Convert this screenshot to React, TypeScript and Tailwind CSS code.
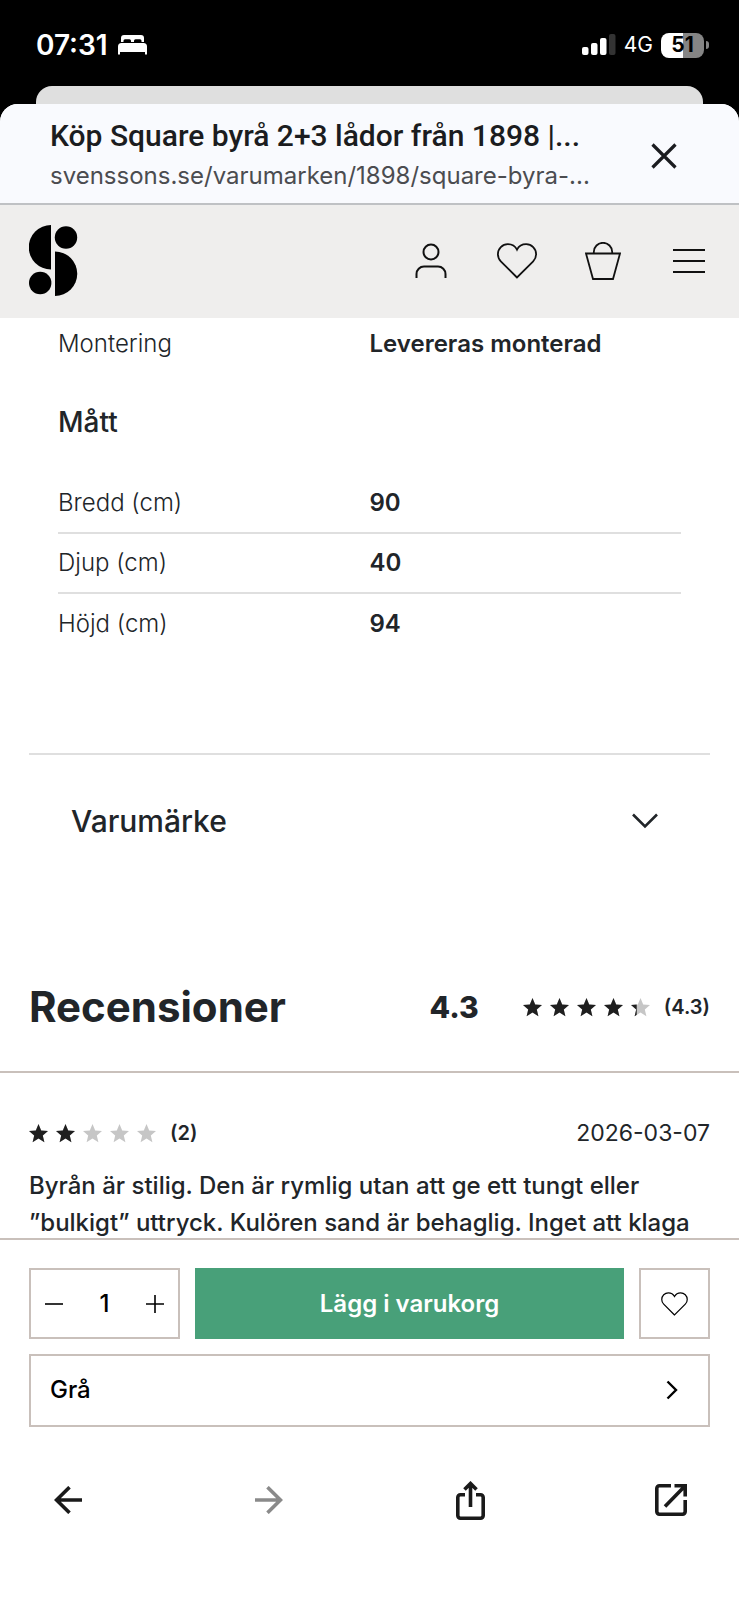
import React, { useState } from 'react';

interface Spec {
  label: string;
  value: string;
}

const measurements: Spec[] = [
  { label: 'Bredd (cm)', value: '90' },
  { label: 'Djup (cm)', value: '40' },
  { label: 'Höjd (cm)', value: '94' },
];

function BedIcon() {
  return (
    <svg className="h-5 w-[29px]" viewBox="0 0 29 20" fill="currentColor" aria-hidden="true">
      <path d="M3 7V3a3 3 0 0 1 3-3h17a3 3 0 0 1 3 3v4h-2.500V5.800A1.500 1.500 0 0 0 22 4.300h-4.500A1.500 1.500 0 0 0 16 5.800V7h-3V5.800A1.500 1.500 0 0 0 11.500 4.300H7A1.500 1.500 0 0 0 5.500 5.800V7z" />
      <path d="M0 11.500A3.500 3.500 0 0 1 3.500 8h22a3.500 3.500 0 0 1 3.500 3.500v8h-2V17H2v2.500H0z" />
    </svg>
  );
}

function SignalIcon() {
  return (
    <svg className="h-[22px] w-[34px]" viewBox="0 0 34 22" fill="currentColor" aria-hidden="true">
      <rect x="0" y="13" width="6.500" height="8" rx="2" />
      <rect x="9" y="9" width="6.500" height="12" rx="2" />
      <rect x="18" y="4" width="6.500" height="17" rx="2" />
      <rect x="27" y="0" width="6.500" height="21" rx="2" fill="#333" />
    </svg>
  );
}

function Logo() {
  return (
    <svg className="h-[71px] w-[49px]" viewBox="0 0 49 71" fill="#000" aria-hidden="true">
      <path d="M22 0v44.500A22.250 22.250 0 0 1 22 0z" />
      <circle cx="37" cy="12.500" r="11.200" />
      <path d="M26 26.500a22.250 22.250 0 0 1 0 44.500z" />
      <circle cx="11.200" cy="58" r="11.200" />
    </svg>
  );
}

function HeartIcon({ className }: { className: string }) {
  return (
    <svg className={className} viewBox="0 0 40 36" fill="none" stroke="currentColor" strokeWidth={1.8} aria-hidden="true">
      <path d="M20 34.500 3.800 18.300A10 10 0 0 1 .9 11.200C.9 5.500 5.400 1.200 10.800 1.200c4.200 0 7.400 2 9.200 5.500 1.800-3.500 5-5.500 9.200-5.500 5.400 0 9.900 4.300 9.900 10a10 10 0 0 1-2.900 7.100z" />
    </svg>
  );
}

const STAR = 'M9.500 0l2.700 6.500 6.800.4-5.200 4.500 1.600 6.900-5.900-3.700-5.900 3.700 1.600-6.900L0 6.900l6.800-.4z';

function Stars({ rating, label }: { rating: number; label: string }) {
  return (
    <div className="flex items-center gap-3.5">
      <div className="flex gap-2">
        {[0, 1, 2, 3, 4].map((i) => {
          const fill = Math.max(0, Math.min(1, rating - i));
          return (
            <svg key={i} className="h-[19px] w-[19px]" viewBox="0 0 19 19" aria-hidden="true">
              <path d={STAR} fill="#c6c6c6" />
              <clipPath id={`star-${label}-${i}`}>
                <rect width={19 * fill} height="19" />
              </clipPath>
              <path d={STAR} fill="#1f1f1f" clipPath={`url(#star-${label}-${i})`} />
            </svg>
          );
        })}
      </div>
      <span className="text-xl font-semibold">({label})</span>
    </div>
  );
}

export default function App() {
  const [quantity, setQuantity] = useState(1);

  return (
    <div className="flex h-screen flex-col bg-black font-['Inter',sans-serif] text-[#212529]">
      {/* Status bar */}
      <div className="flex h-[86px] shrink-0 items-center justify-between pr-[30px] pl-9 pt-1 text-white">
        <div className="flex items-center gap-2.5">
          <span className="text-[28px] font-semibold leading-8">07:31</span>
          <BedIcon />
        </div>
        <div className="flex items-center gap-2">
          <SignalIcon />
          <span className="text-[21px]">4G</span>
          <div className="flex items-center gap-0.5">
            <span className="flex h-[25px] w-[43px] items-center justify-center rounded-lg bg-linear-to-r from-white from-50% to-[#858585] to-50% text-[21px] font-bold text-black">
              51
            </span>
            <span className="h-2 w-[3px] rounded-r-full bg-[#858585]" />
          </div>
        </div>
      </div>

      <div className="mx-9 h-[18px] shrink-0 rounded-t-2xl bg-[#dfdfdf]" />

      <div className="flex min-h-0 flex-1 flex-col overflow-hidden rounded-t-[18px] bg-white">
        {/* Page title */}
        <div className="flex h-[101px] shrink-0 items-center border-b-2 border-[#bfc1c4] bg-[#f9fafe] pt-1 pr-[55px] pl-[50px]">
          <div className="min-w-0 flex-1">
            <h1 className="truncate font-['Roboto',sans-serif] text-3xl font-medium leading-10 text-[#1b1c20]">
              Köp Square byrå 2+3 lådor från 1898 |...
            </h1>
            <p className="truncate text-2xl leading-10 text-[#4b4c50]">svenssons.se/varumarken/1898/square-byra-...</p>
          </div>
          <button type="button" aria-label="Stäng" className="ml-8 flex h-10 w-10 items-center justify-center text-[#1b1c20]">
            <svg className="h-[26px] w-[26px]" viewBox="0 0 26 26" fill="none" stroke="currentColor" strokeWidth={3.2} aria-hidden="true">
              <path d="M1.500 1.500l23 23M24.500 1.500l-23 23" />
            </svg>
          </button>
        </div>

        {/* Shop header */}
        <header className="flex h-[113px] shrink-0 items-center justify-between bg-[#efeeed] pr-[30px] pb-0.5 pl-[29px]">
          <a href="#" aria-label="Svenssons">
            <Logo />
          </a>
          <nav className="flex items-center gap-[46px] text-[#111]">
            <button type="button" aria-label="Konto" className="flex h-10 w-10 items-center justify-center">
              <svg className="h-9 w-8" viewBox="0 0 32 36" fill="none" stroke="currentColor" strokeWidth={2} aria-hidden="true">
                <circle cx="16" cy="9" r="7.500" />
                <path d="M1.500 35v-4a7.500 7.500 0 0 1 7.500-7.500h14a7.500 7.500 0 0 1 7.500 7.500v4" />
              </svg>
            </button>
            <button type="button" aria-label="Favoriter" className="flex h-10 w-10 items-center justify-center">
              <HeartIcon className="h-9 w-10" />
            </button>
            <button type="button" aria-label="Varukorg" className="flex h-10 w-10 items-center justify-center">
              <svg className="h-[38px] w-9" viewBox="0 0 36 38" fill="none" stroke="currentColor" strokeWidth={1.800} aria-hidden="true">
                <path d="M1 11.500h34l-7 25.500H8z" />
                <path d="M8.800 11.500V10a9.200 9.200 0 0 1 18.400 0v1.500" />
              </svg>
            </button>
            <button type="button" aria-label="Meny" className="flex h-10 w-10 items-center justify-center">
              <svg className="h-6 w-8" viewBox="0 0 32 24" stroke="currentColor" strokeWidth={1.800} aria-hidden="true">
                <path d="M0 1h32M0 12h32M0 23h32" />
              </svg>
            </button>
          </nav>
        </header>

        <main className="min-h-0 flex-1 overflow-hidden">
          <section className="mx-[58px] text-2xl">
            <dl className="grid grid-cols-2 pt-2.5 leading-8">
              <dt className="font-light">Montering</dt>
              <dd className="font-semibold">Levereras monterad</dd>
            </dl>
            <h2 className="mt-[46px] text-[28px] font-medium leading-8">Mått</h2>
            <table className="mt-[35px] w-full table-fixed text-left">
              <tbody className="divide-y-2 divide-[#dfdfdf]">
                {measurements.map((row) => (
                  <tr key={row.label} className="h-[60px]">
                    <th scope="row" className="p-0 font-light">{row.label}</th>
                    <td className="p-0 font-semibold">{row.value}</td>
                  </tr>
                ))}
              </tbody>
            </table>
          </section>

          <section className="mx-[29px] mt-[100px] border-t-2 border-[#dfdfdf]">
            <button type="button" className="flex w-full items-center justify-between pt-[46px] pr-[52px] pb-12 pl-[42px]">
              <span className="text-3xl font-medium leading-10">Varumärke</span>
              <svg className="h-4 w-[26px]" viewBox="0 0 26 16" fill="none" stroke="currentColor" strokeWidth={2.600} aria-hidden="true">
                <path d="M1 1.500l12 12 12-12" />
              </svg>
            </button>
          </section>

          <section className="mt-[92px]">
            <div className="flex items-center border-b-2 border-[#c9c0bb] px-[29px] pb-[38px]">
              <h2 className="flex-1 text-[42px] font-bold leading-[52px]">Recensioner</h2>
              <span className="mr-11 text-3xl font-extrabold">4.3</span>
              <Stars rating={4.3} label="4.3" />
            </div>
            <article className="px-[29px] pt-11">
              <div className="flex items-center justify-between">
                <Stars rating={2} label="2" />
                <time className="text-[23px] leading-8">2026-03-07</time>
              </div>
              <p className="mt-[18px] text-2xl font-medium leading-[37px]">
                Byrån är stilig. Den är rymlig utan att ge ett tungt eller ”bulkigt” uttryck. Kulören sand är behaglig. Inget att klaga
              </p>
            </article>
          </section>
        </main>

        {/* Buy bar */}
        <div className="shrink-0 border-t-2 border-[#c9c0bb] px-[29px] pt-7 text-2xl">
          <div className="flex h-[71px] gap-[15px]">
            <div className="flex w-[151px] items-center justify-between border-2 border-[#c9c0bb] px-3.5 text-black">
              <button type="button" aria-label="Minska antal" onClick={() => setQuantity(Math.max(1, quantity - 1))}>
                <svg className="h-[18px] w-[18px]" viewBox="0 0 18 18" stroke="currentColor" strokeWidth={1.600} aria-hidden="true">
                  <path d="M0 9h18" />
                </svg>
              </button>
              <span className="font-medium">{quantity}</span>
              <button type="button" aria-label="Öka antal" onClick={() => setQuantity(quantity + 1)}>
                <svg className="h-[18px] w-[18px]" viewBox="0 0 18 18" stroke="currentColor" strokeWidth={1.600} aria-hidden="true">
                  <path d="M0 9h18M9 0v18" />
                </svg>
              </button>
            </div>
            <button type="button" className="flex-1 bg-[#48a079] font-semibold text-white">
              Lägg i varukorg
            </button>
            <button type="button" aria-label="Spara som favorit" className="flex w-[71px] items-center justify-center border-2 border-[#c9c0bb] text-black">
              <HeartIcon className="h-6 w-[27px]" />
            </button>
          </div>
          <button type="button" className="mt-[15px] flex h-[73px] w-full items-center justify-between border-2 border-[#c9c0bb] pr-[30px] pb-0.5 pl-[19px] text-black">
            <span className="font-medium">Grå</span>
            <svg className="h-5 w-3" viewBox="0 0 12 20" fill="none" stroke="currentColor" strokeWidth={2.400} aria-hidden="true">
              <path d="M1.500 1.500l8.500 8.500-8.500 8.500" />
            </svg>
          </button>
        </div>

        {/* Browser toolbar */}
        <div className="flex h-[173px] shrink-0 items-start justify-between px-12 pt-[53px] text-[#1a1a1a]">
          <button type="button" aria-label="Bakåt" className="flex h-10 w-10 items-center justify-center">
            <svg className="h-7 w-7" viewBox="0 0 28 28" fill="none" stroke="currentColor" strokeWidth={3.600} aria-hidden="true">
              <path d="M28 14H2.500M15.500 1.200L2.500 14l13 12.800" />
            </svg>
          </button>
          <button type="button" aria-label="Framåt" disabled className="flex h-10 w-10 items-center justify-center text-[#8a8a8a]">
            <svg className="h-7 w-7" viewBox="0 0 28 28" fill="none" stroke="currentColor" strokeWidth={3.600} aria-hidden="true">
              <path d="M0 14h25.500M12.500 1.200l13 12.800-13 12.800" />
            </svg>
          </button>
          <button type="button" aria-label="Dela" className="flex h-10 w-10 items-center justify-center">
            <svg className="h-[39px] w-[29px]" viewBox="0 0 29 39" fill="none" stroke="currentColor" strokeWidth={3.600} aria-hidden="true">
              <path d="M9 13.800H4.400a2.600 2.600 0 0 0-2.600 2.600v18.200a2.600 2.600 0 0 0 2.600 2.600h20.200a2.600 2.600 0 0 0 2.600-2.600V16.400a2.600 2.600 0 0 0-2.600-2.600H20" />
              <path d="M14.500 26V2.500M8.500 8.500l6-6 6 6" />
            </svg>
          </button>
          <button type="button" aria-label="Öppna i webbläsare" className="flex h-10 w-10 items-center justify-center">
            <svg className="h-8 w-8" viewBox="0 0 32 32" fill="none" stroke="currentColor" strokeWidth={3.600} aria-hidden="true">
              <path d="M16 1.800H4.400a2.600 2.600 0 0 0-2.600 2.600v23.200a2.600 2.600 0 0 0 2.600 2.600h23.200a2.600 2.600 0 0 0 2.600-2.600V16" />
              <path d="M19.500 1.800h10.700v10.700M29.500 2.500L10 22.500" />
            </svg>
          </button>
        </div>
      </div>
    </div>
  );
}
